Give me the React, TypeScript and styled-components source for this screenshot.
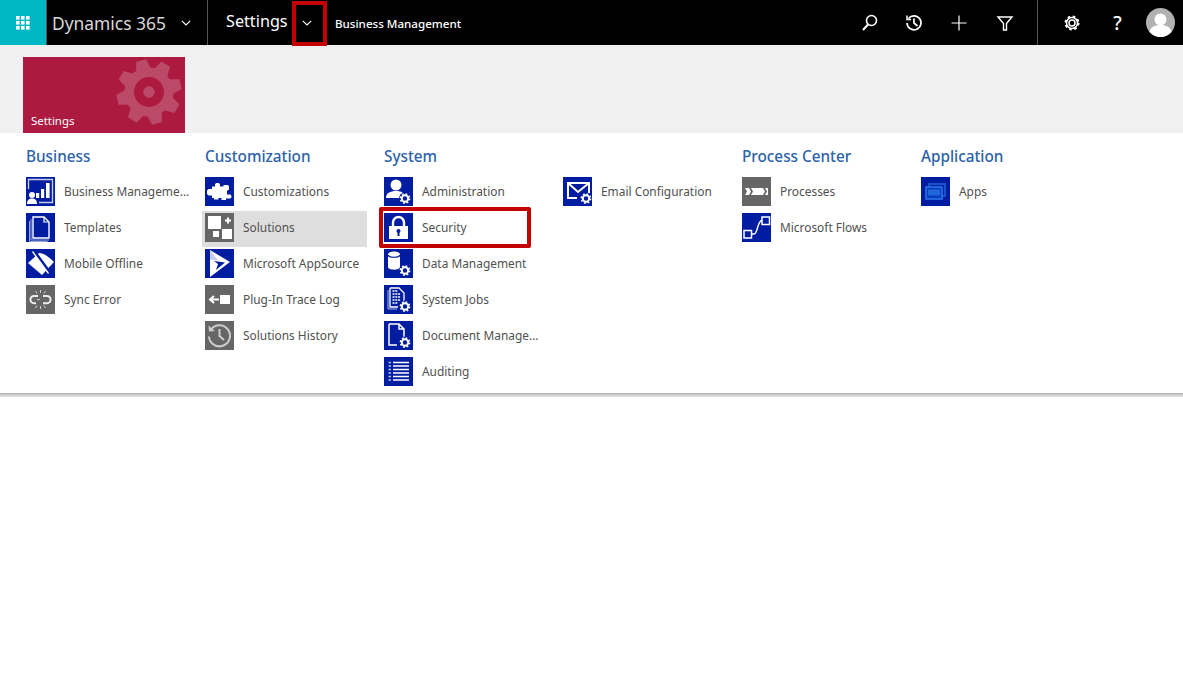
import React from "react";
import styled, { createGlobalStyle } from "styled-components";

const GlobalStyle = createGlobalStyle`
  html, body {
    margin: 0;
    background: #fff;
    font-family: "Noto Sans", "Open Sans", sans-serif;
  }
`;

const Gear = ({ cx, cy, bg = "#001ca0" }: { cx: number; cy: number; bg?: string }) => (
  <g>
    <circle cx={cx} cy={cy} r="6" fill={bg} />
    <circle cx={cx} cy={cy} r="3.2" fill="none" stroke="#fff" strokeWidth="2" />
    <circle
      cx={cx}
      cy={cy}
      r="4.6"
      fill="none"
      stroke="#fff"
      strokeWidth="1.6"
      strokeDasharray="1.8 1.8"
    />
  </g>
);

const icons: Record<string, React.ReactNode> = {
  business: (
    <>
      <path d="M2.500 12V2.500h24v23H13" fill="none" stroke="#c5cdea" strokeWidth="1.4" />
      <rect x="10" y="16" width="3.2" height="5" fill="#fff" />
      <rect x="15" y="12" width="3.2" height="9" fill="#fff" />
      <rect x="20" y="6" width="3.6" height="15" fill="#fff" />
      <circle cx="6" cy="18" r="3" fill="#fff" />
      <path d="M1 27c0-3.900 2-5.500 5-5.500s5 1.600 5 5.500z" fill="#fff" />
    </>
  ),
  templates: (
    <>
      <path d="M7 4h11l5 5v16H7z" fill="#001ca0" stroke="#fff" strokeWidth="1.4" />
      <path d="M18 4v5h5" fill="none" stroke="#fff" strokeWidth="1.2" />
      <path d="M5 6v21h18M3.5 8v20.5h18" fill="none" stroke="#9aa6dc" strokeWidth="1" />
    </>
  ),
  offline: (
    <>
      <path d="M2 14L13 4c5 0 11 5 15 9L16 26z" fill="#fff" />
      <path d="M8 2L24 24" stroke="#001ca0" strokeWidth="3" />
      <path d="M6.500 2.500L22.500 24.500" stroke="#fff" strokeWidth="1.3" />
    </>
  ),
  sync: (
    <>
      <path
        d="M12 11H8a3.600 3.600 0 0 0 0 7.200h2M17 11h4a3.600 3.600 0 0 1 0 7.200h-4"
        fill="none"
        stroke="#eee"
        strokeWidth="2"
      />
      <path
        d="M11 14.600h3M14.500 5v3M9.500 6l1.500 2.500M19.500 6L18 8.500M14.500 21v3M9.500 23l1.500-2.500M19.500 23L18 20.500"
        stroke="#ccc"
        strokeWidth="1"
      />
    </>
  ),
  puzzle: (
    <path
      fill="#fff"
      d="M7 9.500h3V7.500l1-1.500h3l1 1.500v2h3.500v-1.500h4.500l1 1.500v3l-1.500 1h-.5v4h3.500l1 1.500v1l-1 1.500H21v1.500h-4.500V21h-3v1.500H9V21H7v-2.500H3.500L2 17v-3.500L3.500 12H7z"
    />
  ),
  solutions: (
    <>
      <rect x="3" y="3" width="13" height="13" fill="#fff" />
      <path d="M20 7.500h6M23 4.500v6" stroke="#fff" strokeWidth="2" />
      <rect x="8" y="18" width="6" height="6" fill="#fff" />
      <rect x="17" y="16" width="10" height="10" fill="#fff" />
    </>
  ),
  appsource: (
    <>
      <path d="M5 1l20 12L5 28z" fill="#fff" />
      <path d="M5 1l8 10.500-8-1z" fill="#c4cbee" />
      <path d="M9 12l11 1.500L11 21l2-6z" fill="#001ca0" />
    </>
  ),
  plugin: (
    <>
      <rect x="15" y="10" width="10" height="9" fill="#fff" />
      <path d="M14 14.500H5M9 11l-4 3.500L9 18" fill="none" stroke="#fff" strokeWidth="2" />
    </>
  ),
  history: (
    <>
      <path d="M6.500 8a10.500 10.500 0 1 1-2.500 7.500" fill="none" stroke="#ccc" strokeWidth="2" />
      <path d="M3.500 4.500l.5 6 6-.5z" fill="#ccc" />
      <path d="M14.500 8v7l4.500 4" fill="none" stroke="#ccc" strokeWidth="2" />
    </>
  ),
  admin: (
    <>
      <circle cx="12" cy="8" r="5.500" fill="#fff" />
      <path d="M2 21c0-5 4-7 10-7 3 0 5 .5 6.500 1.500L15 21z" fill="#fff" />
      <Gear cx={21} cy={21.5} />
    </>
  ),
  security: (
    <>
      <path d="M9 14V9.500a5.500 5.500 0 0 1 11 0V14" fill="none" stroke="#fff" strokeWidth="2.4" />
      <rect x="5" y="13" width="19" height="13" fill="#fff" />
      <circle cx="14.500" cy="18" r="2" fill="#001ca0" />
      <rect x="13.500" y="18" width="2" height="5" fill="#001ca0" />
    </>
  ),
  data: (
    <>
      <path d="M4 5.500c0-4 12-4 12 0V18c0 3.500-12 3.500-12 0z" fill="#fff" />
      <path d="M4 6c1 3 11 3 12 0" fill="none" stroke="#001ca0" strokeWidth="1.2" />
      <Gear cx={21} cy={21.5} />
    </>
  ),
  jobs: (
    <>
      <path d="M6 3h9l5 5v9M6 3v19h8" fill="none" stroke="#fff" strokeWidth="1.3" />
      <path d="M4 5v19h9" fill="none" stroke="#aab4e4" strokeWidth="1" />
      <path
        d="M8.500 6h5M8.500 9h8M8.500 12h8M8.500 15h8M8.500 18h5"
        stroke="#fff"
        strokeWidth="1.6"
        strokeDasharray="2 .8"
      />
      <Gear cx={21} cy={21.5} />
    </>
  ),
  document: (
    <>
      <path d="M5 3h10l5 5v8M15 3v5h5M5 3v21h8" fill="none" stroke="#fff" strokeWidth="1.5" />
      <Gear cx={21} cy={21.5} />
    </>
  ),
  auditing: (
    <>
      <path d="M9 5.500h16M9 9h16M9 12.500h16M9 16h16M9 19.500h16M9 23h16" stroke="#fff" strokeWidth="1.5" />
      <path d="M4.500 5.500h2.500M4.500 9h2.500M4.500 12.500h2.500M4.500 16h2.500M4.500 19.500h2.500M4.500 23h2.500" stroke="#b9c2ea" strokeWidth="1.5" />
    </>
  ),
  email: (
    <>
      <path d="M14 21H5V6h21v10" fill="none" stroke="#fff" strokeWidth="2" />
      <path d="M5 6l10 9 11-9" fill="none" stroke="#fff" strokeWidth="2" />
      <Gear cx={23} cy={21.5} />
    </>
  ),
  processes: (
    <>
      <path d="M3 11h4l2 3.500L7 18H3l2-3.500z" fill="#fff" />
      <path d="M9 11h12l2 3.500-2 3.500H9l2-3.500z" fill="#fff" />
      <path d="M23 11h3v7h-3l2-3.500z" fill="#fff" />
    </>
  ),
  flows: (
    <>
      <rect x="20" y="4" width="7.500" height="7.500" fill="none" stroke="#fff" strokeWidth="1.5" />
      <rect x="2" y="17.500" width="7.500" height="7.500" fill="none" stroke="#fff" strokeWidth="1.5" />
      <path d="M9.500 21H12c4 0 3-13 8-13.500" fill="none" stroke="#fff" strokeWidth="1.5" />
    </>
  ),
  apps: (
    <>
      <rect x="8" y="7" width="16" height="12" fill="none" stroke="#1f66d8" strokeWidth="1.5" />
      <rect x="5" y="10" width="16" height="12" fill="#0b3cc0" stroke="#2a78e8" strokeWidth="1.5" />
      <rect x="7" y="12.500" width="12" height="6" fill="#1f66d8" />
    </>
  ),
};

type Entry = { label: string; icon: string; grey?: boolean; selected?: boolean; marked?: boolean };
type Group = { title: string; columns: Entry[][] };

const groups: Group[] = [
  {
    title: "Business",
    columns: [
      [
        { label: "Business Manageme...", icon: "business" },
        { label: "Templates", icon: "templates" },
        { label: "Mobile Offline", icon: "offline" },
        { label: "Sync Error", icon: "sync", grey: true },
      ],
    ],
  },
  {
    title: "Customization",
    columns: [
      [
        { label: "Customizations", icon: "puzzle" },
        { label: "Solutions", icon: "solutions", grey: true, selected: true },
        { label: "Microsoft AppSource", icon: "appsource" },
        { label: "Plug-In Trace Log", icon: "plugin", grey: true },
        { label: "Solutions History", icon: "history", grey: true },
      ],
    ],
  },
  {
    title: "System",
    columns: [
      [
        { label: "Administration", icon: "admin" },
        { label: "Security", icon: "security", marked: true },
        { label: "Data Management", icon: "data" },
        { label: "System Jobs", icon: "jobs" },
        { label: "Document Manage...", icon: "document" },
        { label: "Auditing", icon: "auditing" },
      ],
      [{ label: "Email Configuration", icon: "email" }],
    ],
  },
  {
    title: "Process Center",
    columns: [
      [
        { label: "Processes", icon: "processes", grey: true },
        { label: "Microsoft Flows", icon: "flows" },
      ],
    ],
  },
  {
    title: "Application",
    columns: [[{ label: "Apps", icon: "apps" }]],
  },
];

export default function App() {
  return (
    <Page>
      <GlobalStyle />
      <TopBar>
        <Waffle>
          <svg width="14" height="14" viewBox="0 0 14 14" fill="#fff">
            {[0, 5, 10].flatMap((y) =>
              [0, 5, 10].map((x) => <rect key={`${x}-${y}`} x={x} y={y} width="3.6" height="3.6" />)
            )}
          </svg>
        </Waffle>
        <Brand>
          <BrandName>Dynamics 365</BrandName>
          <Chevron />
        </Brand>
        <AreaName>Settings</AreaName>
        <AreaToggle>
          <Chevron />
          <NavMark />
        </AreaToggle>
        <Crumb>Business Management</Crumb>
        <Actions>
          <NavIcon>
            <svg width="20" height="20" viewBox="0 0 20 20" fill="none" stroke="#fff" strokeWidth="1.6">
              <circle cx="11.500" cy="7.500" r="5" />
              <path d="M8 11.500L3 17" strokeWidth="2" />
            </svg>
          </NavIcon>
          <NavIcon>
            <svg width="20" height="20" viewBox="0 0 20 20" fill="none" stroke="#fff" strokeWidth="1.7">
              <path d="M3.500 5.500A7 7 0 1 1 2 10" />
              <path d="M2 2.500v4h4" strokeWidth="1.5" />
              <path d="M9 5.500V10l3.500 3" />
            </svg>
          </NavIcon>
          <NavIcon>
            <svg width="20" height="20" viewBox="0 0 20 20" stroke="#fff" strokeWidth="1.2">
              <path d="M9 2.500v15M1.500 10h15" />
            </svg>
          </NavIcon>
          <NavIcon>
            <svg width="20" height="20" viewBox="0 0 20 20" fill="none" stroke="#fff" strokeWidth="1.4">
              <path d="M3 4h14l-5.500 6.500V17h-3v-6.500z" />
            </svg>
          </NavIcon>
        </Actions>
        <Account>
          <NavIcon>
            <svg width="20" height="20" viewBox="0 0 20 20" fill="none" stroke="#fff">
              <circle cx="9" cy="10" r="3" strokeWidth="1.5" />
              <circle cx="9" cy="10" r="5.500" strokeWidth="1.5" />
              <circle cx="9" cy="10" r="6.500" strokeWidth="2" strokeDasharray="2.550 2.550" />
            </svg>
          </NavIcon>
          <NavIcon>
            <HelpGlyph>?</HelpGlyph>
          </NavIcon>
          <Avatar>
            <svg width="29" height="29" viewBox="0 0 29 29">
              <circle cx="14.500" cy="14.500" r="14.500" fill="#b1b1b1" />
              <circle cx="14.500" cy="11.500" r="6" fill="#fff" />
              <path d="M3.500 24c1-5 5-7 11-7s10 2 11 7a14.500 14.500 0 0 1-22 0z" fill="#fff" />
            </svg>
          </Avatar>
        </Account>
      </TopBar>

      <TileStrip>
        <Tile>
          <TileGear>
            <svg width="70" height="70" viewBox="0 0 70 70">
              {[0, 1, 2, 3, 4, 5, 6, 7].map((i) => (
                <path
                  key={i}
                  d="M27 14L30 2.500h10L43 14z"
                  fill="#bb4a68"
                  transform={`rotate(${i * 45 - 14} 35 35)`}
                />
              ))}
              <circle cx="35" cy="35" r="24.5" fill="#bb4a68" />
              <circle cx="35" cy="35" r="15" fill="#ad1a40" />
              <circle cx="35" cy="35" r="5.700" fill="#bb4a68" />
            </svg>
          </TileGear>
          <TileLabel>Settings</TileLabel>
        </Tile>
      </TileStrip>

      <Menu>
        {groups.map((group) => (
          <GroupBox key={group.title}>
            <GroupTitle>{group.title}</GroupTitle>
            <GroupColumns>
              {group.columns.map((entries, c) => (
                <EntryColumn key={c}>
                  {entries.map((entry) => (
                    <Item key={entry.label} $selected={entry.selected}>
                      <IconBox $grey={entry.grey}>
                        <svg width="29" height="29" viewBox="0 0 29 29">
                          {icons[entry.icon]}
                        </svg>
                      </IconBox>
                      <ItemLabel>{entry.label}</ItemLabel>
                      {entry.marked && <ItemMark />}
                    </Item>
                  ))}
                </EntryColumn>
              ))}
            </GroupColumns>
          </GroupBox>
        ))}
      </Menu>
      <MenuShadow />
    </Page>
  );
}

const Chevron = () => (
  <svg width="10" height="6" viewBox="0 0 10 6" fill="none" stroke="#fff" strokeWidth="1.1">
    <path d="M.8.800L5 5l4.200-4.200" />
  </svg>
);

const Page = styled.div`
  min-height: 687px;
  background: #fff;
`;

const TopBar = styled.header`
  display: flex;
  align-items: stretch;
  height: 45px;
  background: #000;
  color: #fff;
`;

const Waffle = styled.div`
  display: flex;
  align-items: center;
  justify-content: center;
  width: 46px;
  padding-right: 1px;
  box-sizing: border-box;
  background: #00b7c3;
`;

const Brand = styled.div`
  display: flex;
  align-items: center;
  width: 162px;
  padding-left: 5px;
  box-sizing: border-box;
  border-left: 1px solid #555;
  border-right: 1px solid #555;

  svg {
    margin-left: 15px;
  }
`;

const BrandName = styled.span`
  font-size: 17.4px;
  color: #d8d8d8;
  white-space: nowrap;
`;

const AreaName = styled.span`
  margin-left: 18px;
  width: 68px;
  font-size: 16.2px;
  line-height: 42px;
  white-space: nowrap;
`;

const AreaToggle = styled.div`
  position: relative;
  display: flex;
  align-items: center;
  justify-content: center;
  width: 26px;
  margin-right: 15px;
`;

const NavMark = styled.div`
  position: absolute;
  left: -2px;
  top: 1px;
  width: 35px;
  height: 45px;
  box-sizing: border-box;
  border: 4px solid #c40000;
`;

const Crumb = styled.span`
  font-size: 11.6px;
  line-height: 47px;
  font-weight: 500;
  white-space: nowrap;
`;

const Actions = styled.div`
  display: flex;
  margin-left: auto;
  padding-right: 10px;
  border-right: 1px solid #555;
`;

const Account = styled.div`
  display: flex;
  align-items: center;
  padding-left: 12px;
  padding-right: 8px;
`;

const NavIcon = styled.div`
  display: flex;
  align-items: center;
  justify-content: center;
  width: 45px;
  height: 45px;
`;

const HelpGlyph = styled.span`
  font-size: 19px;
  font-weight: 500;
`;

const Avatar = styled.div`
  display: flex;
  margin-left: 6px;
`;

const TileStrip = styled.div`
  height: 88px;
  padding: 12px 0 0 23px;
  box-sizing: border-box;
  background: #f0f0f0;
`;

const Tile = styled.div`
  position: relative;
  display: flex;
  align-items: flex-end;
  width: 162px;
  height: 76px;
  padding: 0 0 5px 8px;
  box-sizing: border-box;
  background: #ad1a40;
`;

const TileGear = styled.div`
  position: absolute;
  right: 1px;
  top: 0;
  display: flex;
`;

const TileLabel = styled.span`
  position: relative;
  font-size: 11.4px;
  color: #fff;
`;

const Menu = styled.nav`
  display: flex;
  height: 260px;
  padding: 13px 0 0 26px;
  box-sizing: border-box;
  background: #fff;
`;

const GroupBox = styled.section`
  display: flex;
  flex-direction: column;
`;

const GroupTitle = styled.h3`
  margin: 0 0 6px;
  height: 23px;
  font-size: 15.3px;
  line-height: 21px;
  font-weight: 500;
  color: #2b62a8;
  white-space: nowrap;
`;

const GroupColumns = styled.div`
  display: flex;
`;

const EntryColumn = styled.div`
  display: flex;
  flex-direction: column;
  width: 179px;
`;

const Item = styled.div<{ $selected?: boolean }>`
  position: relative;
  display: flex;
  align-items: flex-start;
  gap: 9px;
  width: 165px;
  height: 36px;
  margin-left: -3px;
  padding: 2px 0 0 3px;
  box-sizing: border-box;
  background: ${(p) => (p.$selected ? "#dedede" : "transparent")};
`;

const IconBox = styled.div<{ $grey?: boolean }>`
  display: flex;
  flex: none;
  width: 29px;
  height: 29px;
  background: ${(p) => (p.$grey ? "#666666" : "#001ca0")};
`;

const ItemLabel = styled.span`
  font-size: 11.9px;
  line-height: 29px;
  color: #505050;
  white-space: nowrap;
`;

const ItemMark = styled.div`
  position: absolute;
  left: -2px;
  top: -4px;
  width: 152px;
  height: 41px;
  box-sizing: border-box;
  border: 4px solid #c40000;
  border-radius: 2px;
`;

const MenuShadow = styled.div`
  height: 4px;
  background: linear-gradient(#b4b4b4, #e8e8e8);
`;
